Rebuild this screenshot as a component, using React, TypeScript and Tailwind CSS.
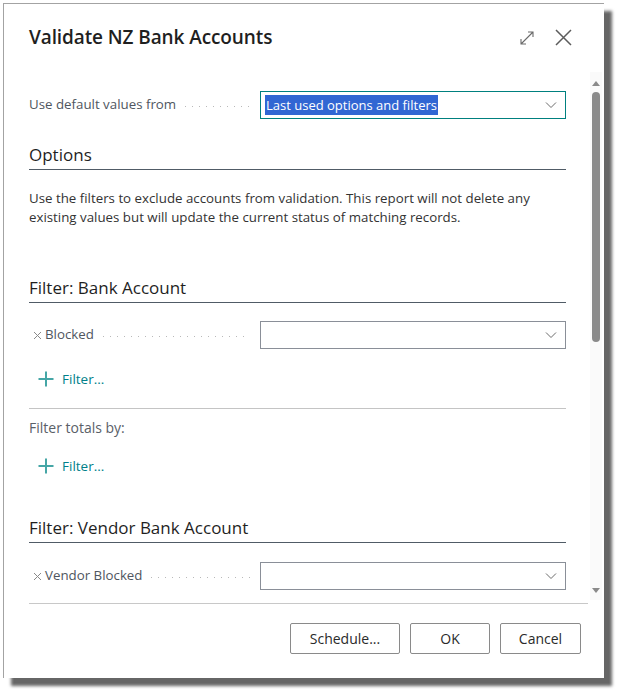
import React from 'react';

const font = { fontFamily: '"Open Sans", "Noto Sans", sans-serif' };

function Leader() {
  return (
    <div className="flex-1 h-px ml-[9px] mr-[8px] mt-[3px] bg-[repeating-linear-gradient(to_right,#b9b9b9_0_1px,transparent_1px_7px)]" />
  );
}

function Chevron() {
  return (
    <svg width="12" height="8" viewBox="0 0 12 8" className="shrink-0">
      <path d="M1 1.5 L6 6.5 L11 1.5" fill="none" stroke="#6b6b6b" strokeWidth="1" />
    </svg>
  );
}

function SelectBox({ value, focused }: { value?: string; focused?: boolean }) {
  return (
    <div
      className={
        'flex-1 h-[28px] flex items-center justify-between pl-[4px] pr-[8px] bg-white border ' +
        (focused ? 'border-[#00807f]' : 'border-[#8a8f98]')
      }
    >
      {value ? (
        <span className="bg-[#3166d3] text-white text-[13px] leading-[20px] px-px">{value}</span>
      ) : (
        <span />
      )}
      <Chevron />
    </div>
  );
}

function FieldRow({ label, removable, value, focused }: { label: string; removable?: boolean; value?: string; focused?: boolean }) {
  return (
    <div className="flex items-center h-[28px]">
      <div className="w-[231px] flex items-center pr-[2px]">
        {removable && (
          <svg width="9" height="9" viewBox="0 0 9 9" className="ml-[4px] mr-[3px] shrink-0">
            <path d="M1 1 L8 8 M8 1 L1 8" stroke="#8a8a8a" strokeWidth="1" />
          </svg>
        )}
        <span className="text-[13.3px] text-[#4f5660] whitespace-nowrap">{label}</span>
        <Leader />
      </div>
      <SelectBox value={value} focused={focused} />
    </div>
  );
}

function AddFilter() {
  return (
    <div className="flex items-center h-[28px] pl-[9px] gap-[8px]">
      <svg width="16" height="16" viewBox="0 0 16 16">
        <path d="M8 0.5 V15.5 M0.5 8 H15.5" stroke="#45a6a6" strokeWidth="2" />
      </svg>
      <span className="text-[13.5px] text-[#00808a]">Filter...</span>
    </div>
  );
}

function SectionHeading({ title, className }: { title: string; className?: string }) {
  return (
    <div className={'h-[26px] leading-[22px] border-b border-[#505b66] text-[17px] text-[#1f1f1f] ' + (className ?? '')}>
      {title}
    </div>
  );
}

export default function App() {
  return (
    <div className="w-[620px] h-[694px] bg-white pt-[3px] pl-[3px]" style={font}>
      <div className="w-[601px] h-[675px] bg-white border-l border-t border-[#a3a3a3] shadow-[8px_8px_3px_rgba(0,0,0,0.6)] flex flex-col">
        {/* Header */}
        <div className="h-[68px] shrink-0 flex items-start justify-between pl-[25px] pr-[32px] pt-[21px]">
          <h1 className="text-[19px] leading-[24px] font-semibold text-[#1f1f1f] tracking-[-0.1px]">Validate NZ Bank Accounts</h1>
          <div className="flex items-center gap-[20px] pt-[4px]">
            <svg width="16" height="16" viewBox="0 0 16 16">
              <path d="M2 14 L14 2 M9 2 H14 V7 M2 9 V14 H7" fill="none" stroke="#6a6a6a" strokeWidth="1.1" />
            </svg>
            <svg width="17" height="17" viewBox="0 0 17 17">
              <path d="M1 1 L16 16 M16 1 L1 16" stroke="#5c5c5c" strokeWidth="1.5" />
            </svg>
          </div>
        </div>

        {/* Scrollable body */}
        <div className="h-[531px] shrink-0 flex overflow-hidden">
          <div className="w-[537px] ml-[25px] flex flex-col">
            <div className="mt-[19px]">
              <FieldRow label="Use default values from" value="Last used options and filters" focused />
            </div>

            <SectionHeading title="Options" className="mt-[25px]" />
            <p className="mt-[19px] text-[13.3px] leading-[19px] text-[#333333]">
              Use the filters to exclude accounts from validation. This report will not delete any existing values but will update the current status of matching records.
            </p>

            <SectionHeading title="Filter: Bank Account" className="mt-[50px]" />
            <div className="mt-[18px]">
              <FieldRow label="Blocked" removable />
            </div>
            <div className="mt-[16px]">
              <AddFilter />
            </div>
            <div className="mt-[15px] border-t border-[#c4c4c4]" />
            <div className="mt-[9px] text-[14px] leading-[20px] text-[#5a6068]">Filter totals by:</div>
            <div className="mt-[14px]">
              <AddFilter />
            </div>

            <SectionHeading title="Filter: Vendor Bank Account" className="mt-[37px]" />
            <div className="mt-[19px]">
              <FieldRow label="Vendor Blocked" removable />
            </div>
          </div>

          {/* Scrollbar */}
          <div className="ml-[24px] w-[12px] h-[528px] bg-[#fafafa] flex flex-col items-center">
            <div className="mt-[9px] w-0 h-0 border-l-[4px] border-r-[4px] border-b-[5px] border-l-transparent border-r-transparent border-b-[#8a8a8a]" />
            <div className="mt-[6px] w-[8px] h-[250px] rounded-full bg-[#8a8a8a]" />
            <div className="flex-1" />
            <div className="mb-[7px] w-0 h-0 border-l-[4px] border-r-[4px] border-t-[5px] border-l-transparent border-r-transparent border-t-[#8a8a8a]" />
          </div>
        </div>

        {/* Footer */}
        <div className="mx-[25px] mr-[16px] border-t border-[#c8c8c8]" />
        <div className="flex justify-end gap-[10px] pt-[19px] pr-[23px]">
          <button className="w-[110px] h-[31px] border border-[#8a8a8a] rounded-[2px] text-[14px] font-medium text-[#2a2a2a] bg-white">
            Schedule...
          </button>
          <button className="w-[80px] h-[31px] border border-[#8a8a8a] rounded-[2px] text-[14px] font-medium text-[#2a2a2a] bg-white">
            OK
          </button>
          <button className="w-[81px] h-[31px] border border-[#8a8a8a] rounded-[2px] text-[14px] font-medium text-[#2a2a2a] bg-white">
            Cancel
          </button>
        </div>
      </div>
    </div>
  );
}
